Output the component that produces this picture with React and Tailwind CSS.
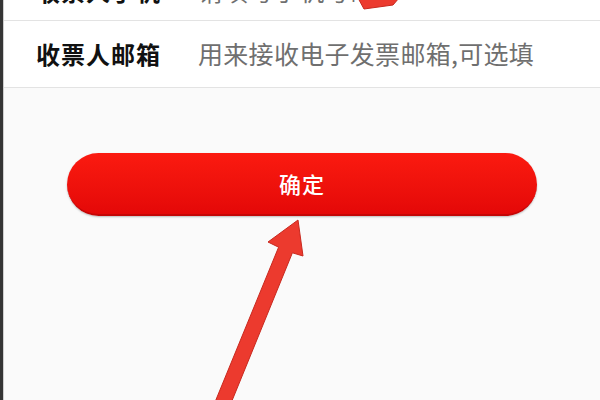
const CJK = { fontFamily: '"Noto Sans CJK SC", "Noto Sans", sans-serif' };

function Row({ label, hint, className = '' }) {
  return (
    <div className={`flex items-center bg-white border-b border-[#e3e3e3] pl-[32px] ${className}`}>
      <span className="w-[162px] shrink-0 text-[24px] tracking-[1px] font-bold text-[#111]">{label}</span>
      <span className="text-[25px] tracking-[0.3px] text-[#6f6f6f] whitespace-nowrap">{hint}</span>
    </div>
  );
}

export default function App() {
  return (
    <div className="relative w-[600px] h-[400px] overflow-hidden flex bg-[#fafafa]" style={CJK}>
      {/* dark frame edge */}
      <div className="w-[3px] shrink-0 bg-[#353535]" />
      <div className="w-px shrink-0 bg-[#cfcfcf]" />

      <div className="flex-1 flex flex-col">
        <Row label="收票人手机" hint="请填写手机号码" className="h-[60px] -mt-[39px]" />
        <Row label="收票人邮箱" hint="用来接收电子发票邮箱,可选填" className="h-[67px]" />

        <div className="mt-[65px] ml-[63px] mr-[63px]">
          <button className="w-full h-[63px] rounded-full bg-gradient-to-b from-[#fb1a10] to-[#e40808] border-b-2 border-[#c40606] shadow-[0_1px_2px_rgba(0,0,0,0.25)] flex items-center justify-center">
            <span className="text-[22px] font-medium text-white tracking-[1px]">确定</span>
          </button>
        </div>
      </div>

      {/* annotation arrows */}
      <svg className="absolute inset-0 pointer-events-none" width="600" height="400" viewBox="0 0 600 400">
        <polygon
          points="213,407 278.6,247.2 268,242 298,220 303,256 292.4,252.8 227,413"
          fill="#ec3a2e"
          stroke="#c8281e"
          strokeWidth="1"
          strokeLinejoin="round"
        />
        <polygon points="358,-2 399,-2 393,5 364,9" fill="#ec3a2e" stroke="#c8281e" strokeWidth="1" />
      </svg>
    </div>
  );
}
